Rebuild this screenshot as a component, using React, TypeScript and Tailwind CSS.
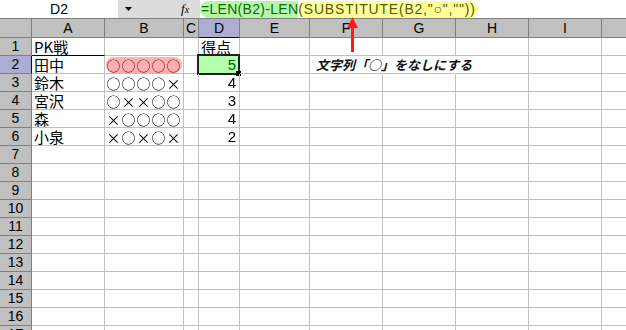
import React from "react";

const COLS = [72, 78, 14, 40, 69, 72, 72, 72, 72];
const LETTERS = ["A", "B", "C", "D", "E", "F", "G", "H", "I"];

const jp = "font-['Noto_Sans_CJK_JP',sans-serif]";
const lat = "font-['Liberation_Sans','Noto_Sans_CJK_JP',sans-serif]";

const names: Record<number, string> = { 1: "PK戦", 2: "田中", 3: "鈴木", 4: "宮沢", 5: "森", 6: "小泉" };
const marks: Record<number, string> = { 2: "○○○○○", 3: "○○○○×", 4: "○××○○", 5: "×○○○○", 6: "×○×○×" };
const scores: Record<number, string> = { 2: "5", 3: "4", 4: "3", 5: "4", 6: "2" };

function Marks({ s, red }: { s: string; red?: boolean }) {
  return (
    <div
      className={`flex h-full items-center will-change-transform [transform:translateZ(0)] ${
        red ? "text-[#800000]" : "text-black"
      }`}
    >
      {s.split("").map((c, i) => (
        <span key={i} className={`inline-block w-[15px] text-center text-[14px] leading-none ${jp}`}>
          {c === "○" ? "○\uFE0E" : c}
        </span>
      ))}
    </div>
  );
}

function Cell({ r, c }: { r: number; c: number }) {
  const w = COLS[c];
  const hideRight = r === 2 && (c === 5 || c === 6);
  const underline = r === 1 && c === 0;
  let content: React.ReactNode = null;
  let extra = "";
  if (c === 0 && names[r]) {
    content = <span className={`pl-[2px] text-[15px] leading-none ${jp}`}>{names[r]}</span>;
  }
  if (c === 1 && marks[r]) {
    content = (
      <div className="h-full w-full pl-[1px]">
        {r === 2 ? (
          <div className="mt-[1px] h-[16px] w-[76px] rounded-full bg-[#ffb0b0]">
            <Marks s={marks[r]} red />
          </div>
        ) : (
          <Marks s={marks[r]} />
        )}
      </div>
    );
  }
  if (c === 3 && r === 1) {
    content = <span className={`pl-[2px] text-[15px] leading-none ${jp}`}>得点</span>;
  }
  if (c === 3 && scores[r]) {
    content = (
      <span className={`ml-auto pr-[3px] text-[15px] leading-none ${lat} ${r === 2 ? "text-[#006000]" : ""}`}>
        {scores[r]}
      </span>
    );
    if (r === 2) extra = "bg-[#b4ffac]";
  }
  if (c === 5 && r === 2) {
    content = (
      <span className={`whitespace-nowrap pl-[6px] text-[13px] font-bold italic leading-none text-[#111] ${jp}`}>
        文字列「○」をなしにする
      </span>
    );
  }
  return (
    <div
      className={`relative flex h-[18px] shrink-0 items-center overflow-visible border-b ${
        underline ? "border-b-black" : "border-b-[#c0c0c0]"
      } ${hideRight ? "border-r border-r-transparent" : "border-r border-r-[#c0c0c0]"} ${extra}`}
      style={{ width: w + 1 }}
    >
      {content}
      {c === 3 && r === 2 && (
        <>
          <div className="pointer-events-none absolute left-[-2px] top-[-2px] h-[21px] w-[43px] border-[2px] border-[#202020]" />
          <div className="absolute left-[37px] top-[15px] h-[5px] w-[5px] bg-black" />
        </>
      )}
    </div>
  );
}

export default function App() {
  const rows = Array.from({ length: 17 }, (_, i) => i + 1);
  return (
    <div className="relative h-[330px] w-[626px] overflow-hidden bg-white">
      {/* formula bar */}
      <div className="flex h-[19px] border-b border-b-[#808080]">
        <div className={`flex w-[118px] items-center justify-center text-[14px] ${lat}`}>D2</div>
        <div className="relative flex w-[82px] items-center bg-[#dcdcdc]">
          <svg className="absolute left-[7px] top-[7px]" width="7" height="4" viewBox="0 0 7 4">
            <polygon points="0,0 7,0 3.5,4" fill="#000" />
          </svg>
          <span className="absolute left-[63px] top-0 text-[13px] italic font-['Liberation_Serif',serif] leading-[18px]">
            f<span className="text-[10px]">x</span>
          </span>
        </div>
        <div className={`flex items-center text-[14px] ${lat}`}>
          <span className="flex h-[17px] items-center rounded-l-full bg-[#b8f5a8] pl-[1px] tracking-[0.3px] text-[#0a6a0a]">
            =LEN(B2)-LEN
          </span>
          <span className="flex h-[17px] items-center rounded-full bg-[#ffff99] pr-[2px] tracking-[0.8px] text-[#5a5a00]">
            (SUBSTITUTE(B2,"○",""))
          </span>
        </div>
      </div>

      {/* column header */}
      <div className="flex h-[19px]">
        <div className="h-[19px] w-[32px] shrink-0 border-b border-r border-[#808080] bg-[#c0c0c0]" />
        {COLS.map((w, i) => (
          <div
            key={i}
            className={`flex h-[19px] shrink-0 items-center justify-center border-r border-b text-[14px] ${lat} ${
              i === 3 ? "border-r-[#808080] border-b-[#000080] bg-[#acacd4]" : "border-[#808080] bg-[#c0c0c0]"
            }`}
            style={{ width: w + 1 }}
          >
            {LETTERS[i]}
          </div>
        ))}
        <div className="h-[19px] flex-1 border-b border-[#808080] bg-[#c0c0c0]" />
      </div>

      {/* rows */}
      {rows.map((r) => (
        <div key={r} className="flex h-[18px]">
          <div
            className={`flex h-[18px] w-[32px] shrink-0 items-center justify-center border-b border-r text-[14px] ${lat} ${
              r === 2 ? "border-b-[#808080] border-r-[#000080] bg-[#acacd4]" : "border-[#808080] bg-[#c0c0c0]"
            }`}
          >
            {r}
          </div>
          {COLS.map((_, c) => (
            <Cell key={c} r={r} c={c} />
          ))}
          <div className="h-[18px] flex-1 border-b border-b-[#c0c0c0]" />
        </div>
      ))}

      {/* red arrow */}
      <svg className="absolute left-[345px] top-[16px]" width="16" height="40" viewBox="0 0 16 40">
        <polygon points="2,12 13,12 7.5,1" fill="#ff1a1a" />
        <rect x="6" y="11" width="3" height="25" fill="#ff1a1a" />
      </svg>
    </div>
  );
}
